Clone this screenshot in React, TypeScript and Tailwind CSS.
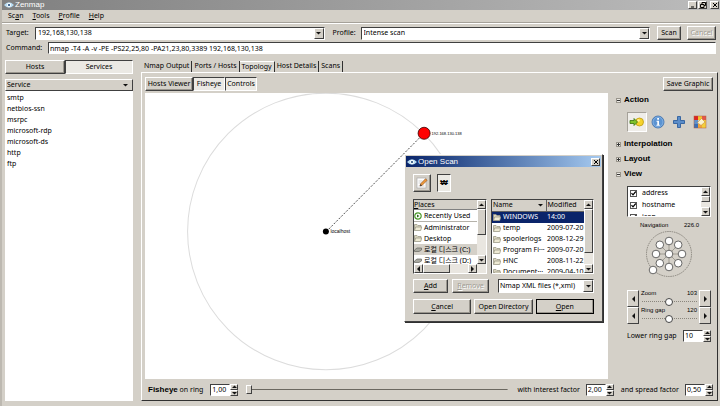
import { useState, type ReactNode } from "react";
import clsx from "clsx";

const RAISED = "border border-t-white border-l-white border-r-[#404040] border-b-[#404040] bg-[#d4d0c8]";
const SUNKEN = "border border-t-[#404040] border-l-[#404040] border-r-white border-b-white";

const SERVICES = ["smtp", "netbios-ssn", "msrpc", "microsoft-rdp", "microsoft-ds", "http", "ftp"];

const FILES = [
  { name: "WINDOWS", modified: "14:00" },
  { name: "temp", modified: "2009-07-20" },
  { name: "spoolerlogs", modified: "2008-12-29" },
  { name: "Program Fi···", modified: "2009-07-20" },
  { name: "HNC", modified: "2008-11-22" },
  { name: "Document···", modified: "2009-04-10" },
];

const ARROWS = {
  up: "M1 4h5L3.500 1.500z",
  down: "M1 2h5L3.500 4.500z",
  left: "M5 0v6L2 3z",
  right: "M2 0v6L5 3z",
};

function Arrow({ dir }: { dir: keyof typeof ARROWS }) {
  return (
    <svg viewBox="0 0 7 6" className="h-[6px] w-[7px] shrink-0" aria-hidden="true">
      <path d={ARROWS[dir]} fill="#111" />
    </svg>
  );
}

function Button({
  children,
  className,
  disabled,
}: {
  children: ReactNode;
  className?: string;
  disabled?: boolean;
}) {
  return (
    <button
      type="button"
      disabled={disabled}
      className={clsx(
        RAISED,
        "flex items-center justify-center whitespace-nowrap shadow-[inset_-1px_-1px_0_#9a968e]",
        disabled && "text-[#a09c94] [text-shadow:1px_1px_0_#fff]",
        className
      )}
    >
      {children}
    </button>
  );
}

function ArrowButton({ dir, label, className }: { dir: keyof typeof ARROWS; label: string; className?: string }) {
  return (
    <button type="button" aria-label={label} className={clsx(RAISED, "flex shrink-0 items-center justify-center", className)}>
      <Arrow dir={dir} />
    </button>
  );
}

function Spin({ id, value, className }: { id: string; value: string; className?: string }) {
  return (
    <div className="flex h-3 shrink-0">
      <input id={id} defaultValue={value} className={clsx(SUNKEN, "min-w-0 bg-white pl-px outline-none", className)} />
      <div className="flex w-2 flex-col">
        <ArrowButton dir="up" label="Increase" className="h-[6px] w-2 overflow-hidden" />
        <ArrowButton dir="down" label="Decrease" className="h-[6px] w-2 overflow-hidden" />
      </div>
    </div>
  );
}

function VScroll({ thumb }: { thumb: string }) {
  return (
    <div className="flex w-[9px] shrink-0 flex-col bg-[#e9e6e0]">
      <ArrowButton dir="up" label="Scroll up" className="h-[9px]" />
      <div className="min-h-0 flex-1">
        <div className={clsx(RAISED, thumb)} />
      </div>
      <ArrowButton dir="down" label="Scroll down" className="h-[9px]" />
    </div>
  );
}

function EyeLogo() {
  return (
    <svg viewBox="0 0 10 6" className="h-[6px] w-[10px]" aria-hidden="true">
      <path d="M0 3Q5-2.500 10 3Q5 8.500 0 3z" fill="#b9dcf2" />
      <circle cx="5" cy="3" r="2" fill="#fff" />
      <circle cx="5" cy="3" r="1.100" fill="#1c4a7c" />
    </svg>
  );
}

function WindowControl({ label, d }: { label: string; d: string }) {
  return (
    <button type="button" aria-label={label} className={clsx(RAISED, "flex h-2 w-[9px] items-center justify-center")}>
      <svg viewBox="0 0 6 6" className="size-[6px]" fill="none" stroke="#000" aria-hidden="true">
        <path d={d} />
      </svg>
    </button>
  );
}

function Folder() {
  return (
    <svg viewBox="0 0 8 7" className="h-[7px] w-2 shrink-0" aria-hidden="true">
      <path d="M.5 6.500v-6h2.500l1 1h3v1.500" fill="#d9d5bf" stroke="#9d9a88" strokeWidth=".8" />
      <path d="M.5 6.500l1.200-3.500h6l-1 3.500z" fill="#eeead4" stroke="#9d9a88" strokeWidth=".8" />
    </svg>
  );
}

function Disk() {
  return (
    <svg viewBox="0 0 8 7" className="h-[7px] w-2 shrink-0" aria-hidden="true">
      <path d="M.5 4L3 2h4.500v2L5 5.500H.5z" fill="#a8a8a0" stroke="#66665f" strokeWidth=".7" />
    </svg>
  );
}

function Header() {
  return (
    <header>
      <div className="flex h-[10px] items-center gap-px bg-linear-to-r from-[#808080] to-[#bcbcbc] pr-px pl-[2px]">
        <EyeLogo />
        <h1 className="flex-1 font-['Liberation_Sans',sans-serif] text-[8px] text-white">Zenmap</h1>
        <WindowControl label="Minimize" d="M1 5h3" />
        <WindowControl label="Restore" d="M2 2.500V.5h3.500v3H4M.5 2.500H4v3H.5z" />
        <span className="w-px" />
        <WindowControl label="Close" d="M1 1l4 4M5 1L1 5" />
      </div>
      <nav className="flex h-[13px] items-center gap-[9px] border-b border-[#a5a199] pl-[6px]">
        <a href="#scan">Sc<u>a</u>n</a>
        <a href="#tools"><u>T</u>ools</a>
        <a href="#profile"><u>P</u>rofile</a>
        <a href="#help"><u>H</u>elp</a>
      </nav>
    </header>
  );
}

function ScanBar() {
  return (
    <form className="flex flex-col gap-[2px] border-t border-white pt-[2px] pr-1 pl-1">
      <div className="flex h-[14px] items-center">
        <label htmlFor="target" className="w-[29px]">Target:</label>
        <div className={clsx(SUNKEN, "flex h-[13px] flex-1 bg-white")}>
          <input id="target" defaultValue="192,168,130,138" className="min-w-0 flex-1 pl-[2px] outline-none" />
          <ArrowButton dir="down" label="Recent targets" className="w-[10px]" />
        </div>
        <label htmlFor="profile" className="w-9 pl-2">Profile:</label>
        <div className={clsx(SUNKEN, "flex h-[13px] flex-1 items-stretch bg-white")}>
          <select id="profile" className="min-w-0 flex-1 appearance-none pl-[2px] outline-none">
            <option>Intense scan</option>
          </select>
          <span className={clsx(RAISED, "pointer-events-none flex w-[10px] items-center justify-center")}>
            <Arrow dir="down" />
          </span>
        </div>
        <Button className="ml-[7px] h-[14px] w-6">Scan</Button>
        <Button className="ml-[6px] h-[14px] w-[29px]" disabled>Cancel</Button>
      </div>
      <div className="flex h-3 items-center">
        <label htmlFor="command" className="w-[42px]">Command:</label>
        <input
          id="command"
          defaultValue="nmap -T4 -A -v -PE -PS22,25,80 -PA21,23,80,3389 192,168,130,138"
          className={clsx(SUNKEN, "h-3 min-w-0 flex-1 bg-white pl-px outline-none")}
        />
      </div>
    </form>
  );
}

function ServiceList() {
  return (
    <aside className="flex w-32 shrink-0 flex-col">
      <div className="mb-[5px] flex h-[14px]">
        <Button className="w-[60px]">Hosts</Button>
        <button type="button" aria-pressed="true" className={clsx(SUNKEN, "flex-1 bg-[#ebe9e4]")}>Services</button>
      </div>
      <div className="min-h-0 flex-1 bg-white">
        <button type="button" className={clsx(RAISED, "flex h-3 w-full items-center justify-between pr-[3px] pl-px")}>
          Service
          <Arrow dir="down" />
        </button>
        <ul className="pt-px pl-[2px]">
          {SERVICES.map((s) => (
            <li key={s} className="h-[11px] leading-[11px]">{s}</li>
          ))}
        </ul>
      </div>
    </aside>
  );
}

function TopologyCanvas() {
  return (
    <svg viewBox="0 0 462 285" className="min-h-0 min-w-0 flex-1 bg-white" role="img" aria-label="Network topology">
      <circle cx="180.500" cy="138" r="138" fill="none" stroke="#dcdcdc" />
      <path d="M181 138L278.500 40" stroke="#222" strokeWidth=".8" strokeDasharray="2 1.500" />
      <circle cx="180.500" cy="138" r="3" fill="#000" />
      <circle cx="278.500" cy="40" r="6" fill="#f00" stroke="#300" strokeWidth=".8" />
      <text x="185" y="140" fontSize="5" fontFamily="Liberation Sans, sans-serif">localhost</text>
      <text x="286" y="42" fontSize="4" fontFamily="Liberation Sans, sans-serif">192.168.130.138</text>
    </svg>
  );
}

function Section({ title, open, children }: { title: string; open?: boolean; children?: ReactNode }) {
  return (
    <section>
      <button
        type="button"
        aria-expanded={!!open}
        className="flex h-[10px] items-center gap-[3px] font-['Liberation_Sans',sans-serif] text-[8px] font-bold"
      >
        <svg viewBox="0 0 5 5" className="size-[5px]" fill="none" aria-hidden="true">
          <rect x=".5" y=".5" width="4" height="4" stroke="#99958c" fill="#eceae5" />
          <path d={open ? "M1 2.500h3" : "M1 2.500h3M2.500 1v3"} stroke="#333" />
        </svg>
        {title}
      </button>
      {children}
    </section>
  );
}

function ActionIcons() {
  return (
    <div className="mt-[7px] mb-[2px] ml-[11px] flex h-5 gap-px">
      <button type="button" aria-label="Change focus" aria-pressed="true" className={clsx(SUNKEN, "flex size-5 items-center justify-center border-t-[#a5a199] border-l-[#a5a199] bg-[#efede9]")}>
        <svg viewBox="0 0 16 14" className="h-[14px] w-4">
          <circle cx="10.500" cy="7" r="4" fill="#f6d32b" stroke="#bd9a12" strokeWidth=".8" />
          <circle cx="9.500" cy="5.500" r="1.300" fill="#fff3a0" />
          <path d="M1 5.500h4V3.500L8.500 7 5 10.500v-2H1z" fill="#7fc22c" stroke="#39720d" strokeWidth=".8" />
        </svg>
      </button>
      <button type="button" aria-label="Show information" className="flex size-5 items-center justify-center">
        <svg viewBox="0 0 14 14" className="size-[14px]">
          <circle cx="7" cy="7" r="6" fill="#5b93d2" stroke="#386ba8" strokeWidth=".8" />
          <circle cx="7" cy="7" r="5" fill="none" stroke="#8db7e5" strokeWidth=".8" />
          <path d="M6.200 3h1.800v1.800H6.200zM5.500 5.800H8v4h.8v1H5.400v-1h.9v-3h-.8z" fill="#fff" />
        </svg>
      </button>
      <button type="button" aria-label="Group children" className="flex size-5 items-center justify-center">
        <svg viewBox="0 0 14 14" className="size-[14px]">
          <path d="M5.500 1.500h3v4h4v3h-4v4h-3v-4h-4v-3h4z" fill="#5b8dc9" stroke="#2f5f9d" strokeWidth=".9" />
        </svg>
      </button>
      <button type="button" aria-label="Fill region" className="flex size-5 items-center justify-center">
        <svg viewBox="0 0 14 14" className="size-[14px]">
          <path d="M1 1h4v4H1z" fill="#d92525" />
          <path d="M5 1h4v4H5z" fill="#f2c230" />
          <path d="M9 1h4v4H9z" fill="#e2574a" />
          <path d="M1 5h4v4H1z" fill="#5e90cd" />
          <path d="M1 9h4v4H1z" fill="#3b6fb5" />
          <path d="M5 9h4v4H5z" fill="#f0a23c" />
          <path d="M9 5h4v8H9z" fill="#f3cf3c" />
          <path d="M4.500 7.500l4-4 3.500 3.500-4 3.500z" fill="#faf3cf" stroke="#c98b2b" strokeWidth=".6" />
          <rect x="1" y="1" width="12" height="12" fill="none" stroke="#b45c3c" strokeWidth=".5" />
        </svg>
      </button>
    </div>
  );
}

function Check({ label }: { label: string }) {
  return (
    <label className="flex h-3 items-center gap-[5px] pl-[2px]">
      <span className="grid size-[7px] shrink-0">
        <input type="checkbox" defaultChecked className="peer col-start-1 row-start-1 size-[7px] appearance-none border border-[#555] bg-white" />
        <svg viewBox="0 0 7 7" className="pointer-events-none invisible col-start-1 row-start-1 size-[7px] peer-checked:visible" fill="none">
          <path d="M1.500 3.200L3 4.800 5.800 1.500" stroke="#000" strokeWidth="1.200" />
        </svg>
      </span>
      {label}
    </label>
  );
}

const DIAL = [0, 45, 90, 135, 180, 225, 270, 315].map((deg) => {
  const a = (deg * Math.PI) / 180;
  return { x: 24 + 13 * Math.cos(a), y: 24 + 13 * Math.sin(a) };
});

function NavigationDial() {
  return (
    <svg viewBox="0 0 48 48" className="mx-auto block size-12" role="img" aria-label="Navigation dial">
      <circle cx="24" cy="24" r="22.500" fill="none" stroke="#77746c" strokeWidth=".8" strokeDasharray="1.500 .8" />
      {DIAL.map((p, i) => (
        <path key={i} d={`M24 24L${p.x} ${p.y}`} stroke="#8a867d" strokeWidth=".7" />
      ))}
      {[{ x: 24, y: 24 }, ...DIAL, { x: 8, y: 40 }].map((p, i) => (
        <circle key={i} cx={p.x} cy={p.y} r="3.800" fill="#fff" stroke="#444" strokeWidth=".8" />
      ))}
    </svg>
  );
}

function ScaleRow({ id, label, value, max }: { id: string; label: string; value: number; max: number }) {
  const [v, setV] = useState(value);
  return (
    <div className="flex h-[17px]">
      <ArrowButton dir="left" label={`Decrease ${label}`} className="w-3" />
      <div className="min-w-0 flex-1 px-[2px] text-[6px]">
        <div className="flex h-[7px] justify-between font-['Liberation_Sans',sans-serif] leading-[7px]">
          <label htmlFor={id}>{label}</label>
          <output htmlFor={id}>{v}</output>
        </div>
        <input
          id={id}
          type="range"
          min={0}
          max={max}
          value={v}
          onChange={(e) => setV(Number(e.target.value))}
          className="block h-[9px] w-full appearance-none bg-[linear-gradient(90deg,#8a867d_1px,transparent_1px)] bg-size-[2px_1px] bg-center bg-repeat-x [&::-webkit-slider-thumb]:size-2 [&::-webkit-slider-thumb]:appearance-none [&::-webkit-slider-thumb]:rounded-full [&::-webkit-slider-thumb]:border [&::-webkit-slider-thumb]:border-[#444] [&::-webkit-slider-thumb]:bg-white"
        />
      </div>
      <ArrowButton dir="right" label={`Increase ${label}`} className="w-3" />
    </div>
  );
}

function ControlPanel() {
  return (
    <aside className="flex w-[95px] shrink-0 flex-col gap-[5px] pt-[2px]">
      <Section title="Action" open>
        <ActionIcons />
      </Section>
      <Section title="Interpolation" />
      <Section title="Layout" />
      <Section title="View" open>
        <div className="mt-[7px] ml-[11px]">
          <div className={clsx(SUNKEN, "flex h-[31px] overflow-hidden bg-white")}>
            <div className="min-w-0 flex-1">
              <Check label="address" />
              <Check label="hostname" />
              <Check label="icon" />
            </div>
            <VScroll thumb="h-[6px]" />
          </div>
          <div className="mt-1 flex h-[9px] justify-between pr-3 pl-[13px] font-['Liberation_Sans',sans-serif] text-[6px] leading-[9px]">
            <span>Navigation</span>
            <span>226.0</span>
          </div>
          <NavigationDial />
          <div className="mt-3">
            <ScaleRow id="zoom" label="Zoom" value={103} max={206} />
            <ScaleRow id="ring-gap" label="Ring gap" value={120} max={240} />
          </div>
          <div className="mt-[6px] flex items-center justify-between">
            <label htmlFor="lower-gap">Lower ring gap</label>
            <Spin id="lower-gap" value="10" className="w-5" />
          </div>
        </div>
      </Section>
    </aside>
  );
}

function FisheyeBar() {
  return (
    <div className="flex h-[21px] items-center pr-1 pl-[3px]">
      <label htmlFor="ring" className="mr-[7px]">
        <b className="font-['Liberation_Sans',sans-serif] text-[8px]">Fisheye</b> on ring
      </label>
      <Spin id="ring" value="1,00" className="w-5" />
      <input
        type="range"
        aria-label="Fisheye ring"
        defaultValue={0}
        className="mr-[10px] ml-2 h-[10px] min-w-0 flex-1 appearance-none bg-[linear-gradient(#6b6860,#6b6860)] bg-size-[100%_1px] bg-center bg-no-repeat [&::-webkit-slider-thumb]:h-[9px] [&::-webkit-slider-thumb]:w-[6px] [&::-webkit-slider-thumb]:appearance-none [&::-webkit-slider-thumb]:border [&::-webkit-slider-thumb]:border-t-white [&::-webkit-slider-thumb]:border-r-[#404040] [&::-webkit-slider-thumb]:border-b-[#404040] [&::-webkit-slider-thumb]:border-l-white [&::-webkit-slider-thumb]:bg-[#d4d0c8]"
      />
      <label htmlFor="interest" className="mr-[6px]">with interest factor</label>
      <Spin id="interest" value="2,00" className="w-5" />
      <label htmlFor="spread" className="mr-[6px] ml-[7px]">and spread factor</label>
      <Spin id="spread" value="0,50" className="w-5" />
    </div>
  );
}

function Notebook() {
  return (
    <main className="flex min-w-0 flex-1 flex-col">
      <div role="tablist" className="flex h-3 items-center pl-px">
        {["Nmap Output", "Ports / Hosts", "Topology", "Host Details", "Scans"].map((t) => (
          <button
            key={t}
            type="button"
            role="tab"
            aria-selected={t === "Topology"}
            className={clsx(
              "h-[11px] border-r border-r-[#303030] px-[2px] whitespace-nowrap",
              t === "Topology" && "border-t border-t-white bg-[#dedbd4]"
            )}
          >
            {t}
          </button>
        ))}
      </div>
      <div className="flex min-h-0 flex-1 flex-col border border-t-white border-r-[#303030] border-b-[#303030] border-l-white pl-[3px]">
        <div className="flex items-start pt-1 pr-1 pb-[2px]">
          <Button className="h-[14px] w-12">Hosts Viewer</Button>
          <button type="button" aria-pressed="true" className={clsx(SUNKEN, "h-[14px] w-8 bg-[#ebe9e4]")}>Fisheye</button>
          <button type="button" aria-pressed="true" className={clsx(SUNKEN, "h-[14px] w-8 bg-[#ebe9e4]")}>Controls</button>
          <Button className="ml-auto h-[14px] w-[50px]">Save Graphic</Button>
        </div>
        <div className="flex min-h-0 flex-1 gap-2 pr-[6px]">
          <TopologyCanvas />
          <ControlPanel />
        </div>
        <FisheyeBar />
      </div>
    </main>
  );
}

function Places() {
  return (
    <div className={clsx(SUNKEN, "flex h-[75px] w-[74px] flex-col bg-white")}>
      <div className="flex min-h-0 flex-1">
        <div className="min-w-0 flex-1 overflow-hidden">
          <div className="h-[10px] border-b border-[#808080] bg-[#d4d0c8] leading-[9px]"><u>P</u>laces</div>
          <ul className="whitespace-nowrap [&>li]:flex [&>li]:h-[11px] [&>li]:items-center [&>li]:gap-[2px] [&>li]:leading-[11px]">
            <li>
              <svg viewBox="0 0 8 8" className="size-2 shrink-0" fill="none" aria-hidden="true">
                <circle cx="4" cy="4" r="3.200" stroke="#4f9b2d" strokeWidth="1.200" />
                <path d="M3 2.500v3L5.500 4z" fill="#2d6b14" />
              </svg>
              Recently Used
            </li>
            <li aria-hidden="true" className="max-h-px bg-[#b5b2aa]" />
            <li><Folder />Administrator</li>
            <li><Folder />Desktop</li>
            <li className="bg-[#d4d0c8]"><Disk />로컬 디스크 (C:)</li>
            <li><Disk />로컬 디스크 (D:)</li>
          </ul>
        </div>
        <VScroll thumb="h-[26px]" />
      </div>
      <div className="flex h-[9px] shrink-0 bg-[#e9e6e0] pr-[9px]">
        <ArrowButton dir="left" label="Scroll left" className="w-[9px]" />
        <div className={clsx(RAISED, "w-[27px]")} />
        <ArrowButton dir="right" label="Scroll right" className="ml-auto w-[9px]" />
      </div>
    </div>
  );
}

function FileTable() {
  return (
    <div className={clsx(SUNKEN, "flex h-[75px] min-w-0 flex-1 bg-white")}>
      <div className="min-w-0 flex-1 overflow-hidden">
        <table className="w-full table-fixed border-collapse whitespace-nowrap">
          <thead>
            <tr className="h-[11px] bg-[#d4d0c8] text-left">
              <th className="w-[54px] border-r border-b border-[#606060] p-0 font-normal">
                <span className="flex items-center justify-between pr-[2px] pl-px">
                  Name
                  <Arrow dir="down" />
                </span>
              </th>
              <th className="border-b border-[#606060] p-0 pl-px font-normal">Modified</th>
            </tr>
          </thead>
          <tbody>
            {FILES.map((f, i) => (
              <tr key={f.name} className={clsx("h-[11px]", i === 0 && "bg-[#0a246a] text-white")}>
                <td className="p-0 pl-px">
                  <span className="flex h-[11px] items-center gap-[2px]">
                    <Folder />
                    {f.name}
                  </span>
                </td>
                <td className="p-0 pl-px">{f.modified}</td>
              </tr>
            ))}
          </tbody>
        </table>
      </div>
      <VScroll thumb="h-[44px]" />
    </div>
  );
}

function OpenScanDialog() {
  return (
    <div
      role="dialog"
      aria-label="Open Scan"
      className={clsx(RAISED, "absolute top-[154px] left-[402px] w-[199px] p-px shadow-[1px_1px_0_#303030]")}
    >
      <div className="flex h-[11px] items-center gap-px bg-linear-to-r from-[#0a246a] to-[#a6caf0] pr-px pl-px">
        <EyeLogo />
        <h2 className="flex-1 font-['Liberation_Sans',sans-serif] text-[8px] text-white">Open Scan</h2>
        <WindowControl label="Close dialog" d="M1 1l4 4M5 1L1 5" />
      </div>
      <div className="p-[7px] pb-[6px]">
        <div className="mb-[7px] flex gap-[6px]">
          <Button className="size-[18px]">
            <svg viewBox="0 0 12 12" className="size-3" role="img" aria-label="Type a file name">
              <rect x="1" y="1" width="9" height="10" fill="#fff" stroke="#aaa" strokeWidth=".7" />
              <path d="M2.500 4h4M2.500 6h3M2.500 9h6" stroke="#bbb" strokeWidth=".7" />
              <path d="M4 9l.6-2.200L9.500 1.800l1.600 1.500L6.200 8.300z" fill="#ee9a3a" stroke="#8f4a17" strokeWidth=".6" />
              <path d="M4 9l.6-2 1.400 1.400z" fill="#333" />
            </svg>
          </Button>
          <button
            type="button"
            aria-pressed="true"
            className={clsx(SUNKEN, "h-[18px] w-[14px] bg-[#ebe9e4] font-['Liberation_Sans',sans-serif] text-[8px] font-bold text-black")}
          >
            ₩
          </button>
        </div>
        <div className="flex gap-1">
          <Places />
          <FileTable />
        </div>
        <div className="mt-[5px] flex h-[14px] gap-1">
          <Button className="w-[35px]"><span><u>A</u>dd</span></Button>
          <Button className="w-[37px]" disabled><span><u>R</u>emove</span></Button>
          <div className={clsx(SUNKEN, "ml-auto flex w-24 bg-white")}>
            <select aria-label="File type" className="min-w-0 flex-1 appearance-none pl-px outline-none">
              <option>Nmap XML files (*,xml)</option>
            </select>
            <span className={clsx(RAISED, "pointer-events-none flex w-[10px] items-center justify-center")}>
              <Arrow dir="down" />
            </span>
          </div>
        </div>
        <div className="mt-[6px] grid h-[15px] grid-cols-3 gap-[3px]">
          <Button><span><u>C</u>ancel</span></Button>
          <Button>Open Directory</Button>
          <Button className="outline -outline-offset-1 outline-black"><span><u>O</u>pen</span></Button>
        </div>
      </div>
    </div>
  );
}

export default function App() {
  return (
    <div className="relative flex h-screen flex-col overflow-hidden border-l-2 border-[#bdb9b1] bg-[#d4d0c8] font-['Noto_Sans','Noto_Sans_CJK_KR',sans-serif] text-[7px] leading-[10px] text-black">
      <Header />
      <ScanBar />
      <div className="flex min-h-0 flex-1 gap-2 pt-[6px] pr-[2px] pb-[5px] pl-[3px]">
        <ServiceList />
        <Notebook />
      </div>
      <OpenScanDialog />
    </div>
  );
}
